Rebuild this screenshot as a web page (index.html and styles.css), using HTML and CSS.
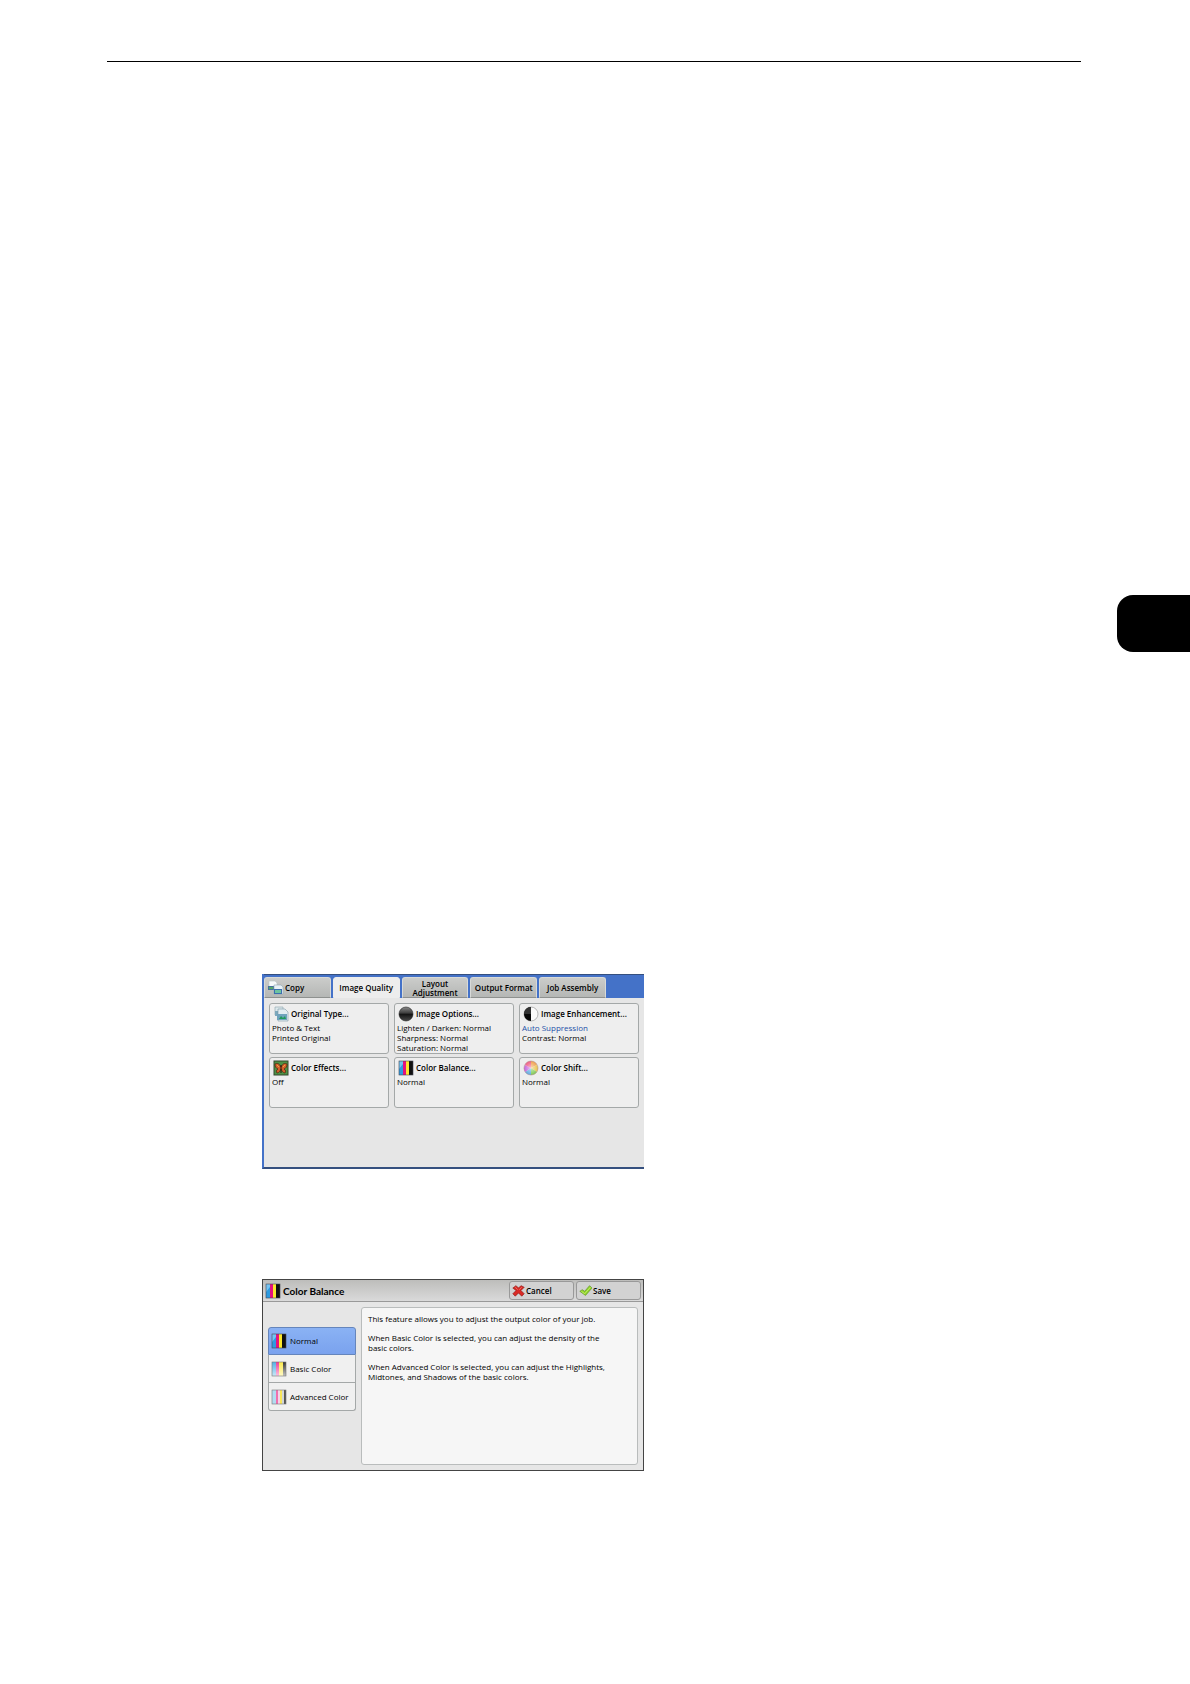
FILE: index.html
```html
<!DOCTYPE html>
<html lang="en">
<head>
  <meta charset="UTF-8" />
  <meta name="viewport" content="width=device-width, initial-scale=1.0" />
  <title>Color Balance</title>
  <link rel="stylesheet" href="styles.css">
</head>
<body>
  <header class="page-header"></header>
  <div class="chapter-tab"></div>

  <main>
    <section class="screen copy-screen">
      <nav class="tabs">
        <button class="tab copy-tab">
          <svg class="icon" viewBox="0 0 16 16">
            <path d="M1 1h6l2 2v6H1z" fill="#f7fafa" stroke="#b9c6c8" stroke-width=".6"/>
            <rect x="0" y="6" width="6" height="4" fill="#46739b"/>
            <rect x="1" y="7" width="4" height="2" fill="#55a869"/>
            <path d="M6 5h7l2 2v7H6z" fill="#e9f1f5" stroke="#8fa6b4" stroke-width=".6"/>
            <rect x="6" y="9" width="8" height="5" fill="#3b6fae"/>
            <rect x="7" y="10" width="6" height="3" fill="#6cc4a0"/>
          </svg>
          <span>Copy</span>
        </button>
        <button class="tab active">Image Quality</button>
        <button class="tab">Layout Adjustment</button>
        <button class="tab">Output Format</button>
        <button class="tab">Job Assembly</button>
      </nav>

      <div class="cards">
        <button class="card">
          <span class="card-title">
            <svg class="icon" viewBox="0 0 16 16">
              <path d="M2 1h8v8H2z" fill="#dce8ec" stroke="#8ba3ab" stroke-width=".6"/>
              <rect x="2" y="5" width="8" height="5" fill="#7da8bd"/>
              <path d="M5 3h7l3 3v9H5z" fill="#e2edf2" stroke="#7d98a5" stroke-width=".6"/>
              <rect x="4" y="8" width="10" height="6" fill="#6fa3bd"/>
              <path d="M6 13l2-3 2 2 2-2 1 3z" fill="#1f9a5a"/>
            </svg>
            Original Type...
          </span>
          <span>Photo &amp; Text</span>
          <span>Printed Original</span>
        </button>
        <button class="card">
          <span class="card-title">
            <svg class="icon" viewBox="0 0 16 16">
              <defs>
                <linearGradient id="ball" x1="0" y1="0" x2="0" y2="1">
                  <stop offset="0" stop-color="#8a8a8a"/>
                  <stop offset=".45" stop-color="#3a3a3a"/>
                  <stop offset=".5" stop-color="#111"/>
                  <stop offset="1" stop-color="#4a4a4a"/>
                </linearGradient>
              </defs>
              <circle cx="8" cy="8" r="7" fill="url(#ball)" stroke="#222" stroke-width=".6"/>
            </svg>
            Image Options...
          </span>
          <span>Lighten / Darken: Normal</span>
          <span>Sharpness: Normal</span>
          <span>Saturation: Normal</span>
        </button>
        <button class="card">
          <span class="card-title">
            <svg class="icon" viewBox="0 0 16 16">
              <circle cx="8" cy="8" r="7" fill="#fafafa" stroke="#999" stroke-width=".7"/>
              <path d="M8 1a7 7 0 0 0 0 14z" fill="#080808"/>
              <path d="M8 1a7 7 0 0 0-7 7h7z" fill="#333"/>
            </svg>
            Image Enhancement...
          </span>
          <span class="changed">Auto Suppression</span>
          <span>Contrast: Normal</span>
        </button>
        <button class="card">
          <span class="card-title">
            <svg class="icon" viewBox="0 0 16 16">
              <rect x="1" y="1" width="14" height="14" fill="#4c9245" stroke="#34482f"/>
              <path d="M8 7C6 3 4 3 2 4c0 3 1 4 3 5-2 1-2 3-1 4 2 0 3-2 4-4 1 2 2 4 4 4 1-1 1-3-1-4 2-1 3-2 3-5-2-1-4-1-6 3z" fill="#d2602b" stroke="#4b2410" stroke-width=".7"/>
              <path d="M8 5v8" stroke="#26170d"/>
              <path d="M4 5l2 2M12 5l-2 2" stroke="#f1a044"/>
            </svg>
            Color Effects...
          </span>
          <span>Off</span>
        </button>
        <button class="card">
          <span class="card-title">
            <svg class="icon" viewBox="0 0 16 16"><use href="#bars"/></svg>
            Color Balance...
          </span>
          <span>Normal</span>
        </button>
        <button class="card">
          <span class="card-title">
            <svg class="icon" viewBox="0 0 16 16">
              <defs>
                <radialGradient id="glow">
                  <stop offset="0" stop-color="#fff" stop-opacity=".6"/>
                  <stop offset="1" stop-color="#fff" stop-opacity="0"/>
                </radialGradient>
              </defs>
              <path d="M8 8V1a7 7 0 0 1 6 4z" fill="#f0a04c"/>
              <path d="M8 8l6-3a7 7 0 0 1 0 7z" fill="#e8c24c"/>
              <path d="M8 8l6 4a7 7 0 0 1-6 3z" fill="#7fcb55"/>
              <path d="M8 8v7a7 7 0 0 1-6-3z" fill="#5fa9e2"/>
              <path d="M8 8l-6 4a7 7 0 0 1 0-7z" fill="#c465dc"/>
              <path d="M8 8L2 5a7 7 0 0 1 6-4z" fill="#ee5c82"/>
              <circle cx="8" cy="8" r="7" fill="url(#glow)" stroke="#b39292" stroke-width=".6"/>
            </svg>
            Color Shift...
          </span>
          <span>Normal</span>
        </button>
      </div>
    </section>

    <section class="screen balance-screen">
      <header class="title-bar">
        <svg class="icon" viewBox="0 0 16 16">
          <defs>
            <g id="bars">
              <rect x="1" y="1" width="5" height="14" fill="#2e9be0"/>
              <path d="M1 1h4v3L1 9z" fill="#74c4f2"/>
              <rect x="5" y="1" width="4" height="14" fill="#e5127d"/>
              <rect x="8" y="1" width="4" height="14" fill="#fbe72c"/>
              <rect x="11" y="1" width="4" height="14" fill="#111"/>
              <rect x="1" y="1" width="14" height="14" fill="none" stroke="#454550" stroke-width=".6"/>
            </g>
          </defs>
          <use href="#bars"/>
        </svg>
        <h1>Color Balance</h1>
        <button class="action">
          <svg class="icon" viewBox="0 0 16 16">
            <path d="M5 2l3 3 3-3 4 2-4 4 4 4-3 3-4-4-4 4-3-3 4-4-4-3z" fill="#d92a25" stroke="#8e1714" stroke-width=".8"/>
            <path d="M4 4l3 3M12 4L9 7" stroke="#f47a70"/>
          </svg>
          Cancel
        </button>
        <button class="action">
          <svg class="icon" viewBox="0 0 16 16">
            <path d="M1 9l3-2 3 2 6-7 3 3-8 9z" fill="#8fd42b" stroke="#5f8f22" stroke-width=".8"/>
            <path d="M3 9l4 3 7-8" fill="none" stroke="#cbf16f"/>
          </svg>
          Save
        </button>
      </header>

      <div class="balance-body">
        <div class="modes">
          <button class="mode selected">
            <svg class="icon" viewBox="0 0 16 16"><use href="#bars"/></svg>
            Normal
          </button>
          <button class="mode">
            <svg class="icon" viewBox="0 0 16 16">
              <defs>
                <linearGradient id="fade" x1="0" y1="0" x2="0" y2="1">
                  <stop offset="0" stop-color="#fff" stop-opacity="0"/>
                  <stop offset="1" stop-color="#fff" stop-opacity=".7"/>
                </linearGradient>
              </defs>
              <rect x="1" y="1" width="4" height="14" fill="#50b1e5"/>
              <rect x="5" y="1" width="3" height="14" fill="#ee3c96"/>
              <rect x="8" y="1" width="4" height="14" fill="#fbe94a"/>
              <rect x="12" y="1" width="3" height="14" fill="#333"/>
              <rect x="1" y="1" width="14" height="14" fill="url(#fade)" stroke="#777" stroke-width=".6"/>
            </svg>
            Basic Color
          </button>
          <button class="mode">
            <svg class="icon" viewBox="0 0 16 16">
              <rect x="1" y="1" width="14" height="14" fill="#eef6fb"/>
              <path d="M2 1v14M4 1v14" stroke="#76c1e8"/>
              <rect x="5" y="1" width="2" height="14" fill="#f06fae"/>
              <path d="M8 1v14" stroke="#f6b3d2"/>
              <rect x="9" y="1" width="2" height="14" fill="#f8e65a"/>
              <path d="M12 1v14" stroke="#b5b5b5"/>
              <rect x="13" y="1" width="2" height="14" fill="#555"/>
              <rect x="1" y="1" width="14" height="14" fill="none" stroke="#777" stroke-width=".6"/>
            </svg>
            Advanced Color
          </button>
        </div>

        <div class="description">
          <p>This feature allows you to adjust the output color of your job.</p>
          <p>When Basic Color is selected, you can adjust the density of the<br>basic colors.</p>
          <p>When Advanced Color is selected, you can adjust the Highlights,<br>Midtones, and Shadows of the basic colors.</p>
        </div>
      </div>
    </section>
  </main>
</body>
</html>
```

FILE: styles.css
```css
:root {
  --blue: #4472c8;
  --navy: #35507f;
  --panel: #e6e6e6;
  --card: #eeeeee;
  --line: #a4a8a8;
}

* {
  box-sizing: border-box;
  margin: 0;
  padding: 0;
}

body {
  display: flex;
  flex-direction: column;
  min-height: 100vh;
  background: #fff;
  color: #000;
  font-family: "Open Sans", "Noto Sans", sans-serif;
  font-size: 8px;
  font-weight: 500;
  line-height: 10px;
}

button {
  font: inherit;
  color: inherit;
  text-align: left;
  cursor: pointer;
}

.icon {
  flex: none;
  width: 16px;
  height: 16px;
}

.page-header {
  margin: 61px 109px 0 107px;
  border-top: 1px solid #000;
}

.chapter-tab {
  align-self: flex-end;
  width: 73px;
  height: 57px;
  margin-top: 533px;
  background: #000;
  border-radius: 16px 0 0 16px;
}

main {
  display: flex;
  flex-direction: column;
  gap: 110px;
  padding: 322px 24px 24px 262px;
}

.screen {
  width: 100%;
  max-width: 382px;
  background: var(--panel);
}

/* Copy screen */
.copy-screen {
  min-height: 195px;
  border-left: 2px solid var(--blue);
  border-bottom: 2px solid var(--navy);
}

.tabs {
  display: grid;
  grid-template-columns: repeat(5, minmax(0, 1fr));
  gap: 2px;
  height: 24px;
  padding: 2px 38px 0 0;
  background: var(--blue);
  border-top: 1px solid var(--navy);
}

.tab {
  display: flex;
  align-items: center;
  justify-content: center;
  font-weight: 600;
  line-height: 9px;
  text-align: center;
  background: linear-gradient(#cbccca, #b5b7b5);
  border: 1px solid #d8dad8;
  border-bottom-color: #8e918f;
  border-radius: 3px 3px 0 0;
}

.tab.active {
  background: #ededed;
  border-color: #ededed;
}

.copy-tab {
  justify-content: flex-start;
  gap: 1px;
  padding-left: 3px;
}

.cards {
  display: grid;
  grid-template-columns: repeat(3, 1fr);
  gap: 3px 5px;
  padding: 5px;
}

.card {
  display: flex;
  flex-direction: column;
  min-height: 51px;
  padding: 2px 2px 0;
  background: var(--card);
  border: 1px solid var(--line);
  border-radius: 3px;
  white-space: nowrap;
}

.card-title {
  display: flex;
  align-items: center;
  gap: 2px;
  margin-bottom: 1px;
  padding-left: 1px;
  font-weight: 600;
}

.changed {
  color: #2450a8;
}

/* Color balance screen */
.balance-screen {
  min-height: 192px;
  border: 1px solid #444;
}

.title-bar {
  display: flex;
  align-items: center;
  gap: 2px;
  height: 22px;
  padding: 0 2px;
  background: linear-gradient(#bdbdbb, #dadada);
  border-bottom: 1px solid #999;
}

.title-bar h1 {
  flex: 1;
  font-family: Lato, "Open Sans", sans-serif;
  font-size: 10px;
  font-weight: 700;
}

.action {
  display: flex;
  align-items: center;
  gap: 1px;
  width: 65px;
  height: 19px;
  padding-left: 2px;
  font-weight: 600;
  background: #d2d2d2;
  border: 1px solid #999;
  border-radius: 3px;
}

.action .icon {
  width: 13px;
  height: 13px;
}

.balance-body {
  display: flex;
  gap: 5px;
  min-height: 168px;
  padding: 5px;
}

.modes {
  width: 88px;
  padding-top: 20px;
}

.mode {
  display: flex;
  align-items: center;
  gap: 3px;
  width: 100%;
  height: 28px;
  padding-left: 2px;
  background: #f0f0f0;
  border: 1px solid var(--line);
  border-top: 0;
  white-space: nowrap;
}

.mode.selected {
  background: linear-gradient(#8ab2f4, #7aa2ee);
  border: 1px solid #6585bc;
  border-radius: 3px 3px 0 0;
}

.mode:last-child {
  border-radius: 0 0 3px 3px;
}

.description {
  display: flex;
  flex: 1;
  flex-direction: column;
  gap: 9px;
  padding: 6px;
  background: #f6f6f6;
  border: 1px solid #b9bcbc;
  border-radius: 3px;
  white-space: nowrap;
}
```
